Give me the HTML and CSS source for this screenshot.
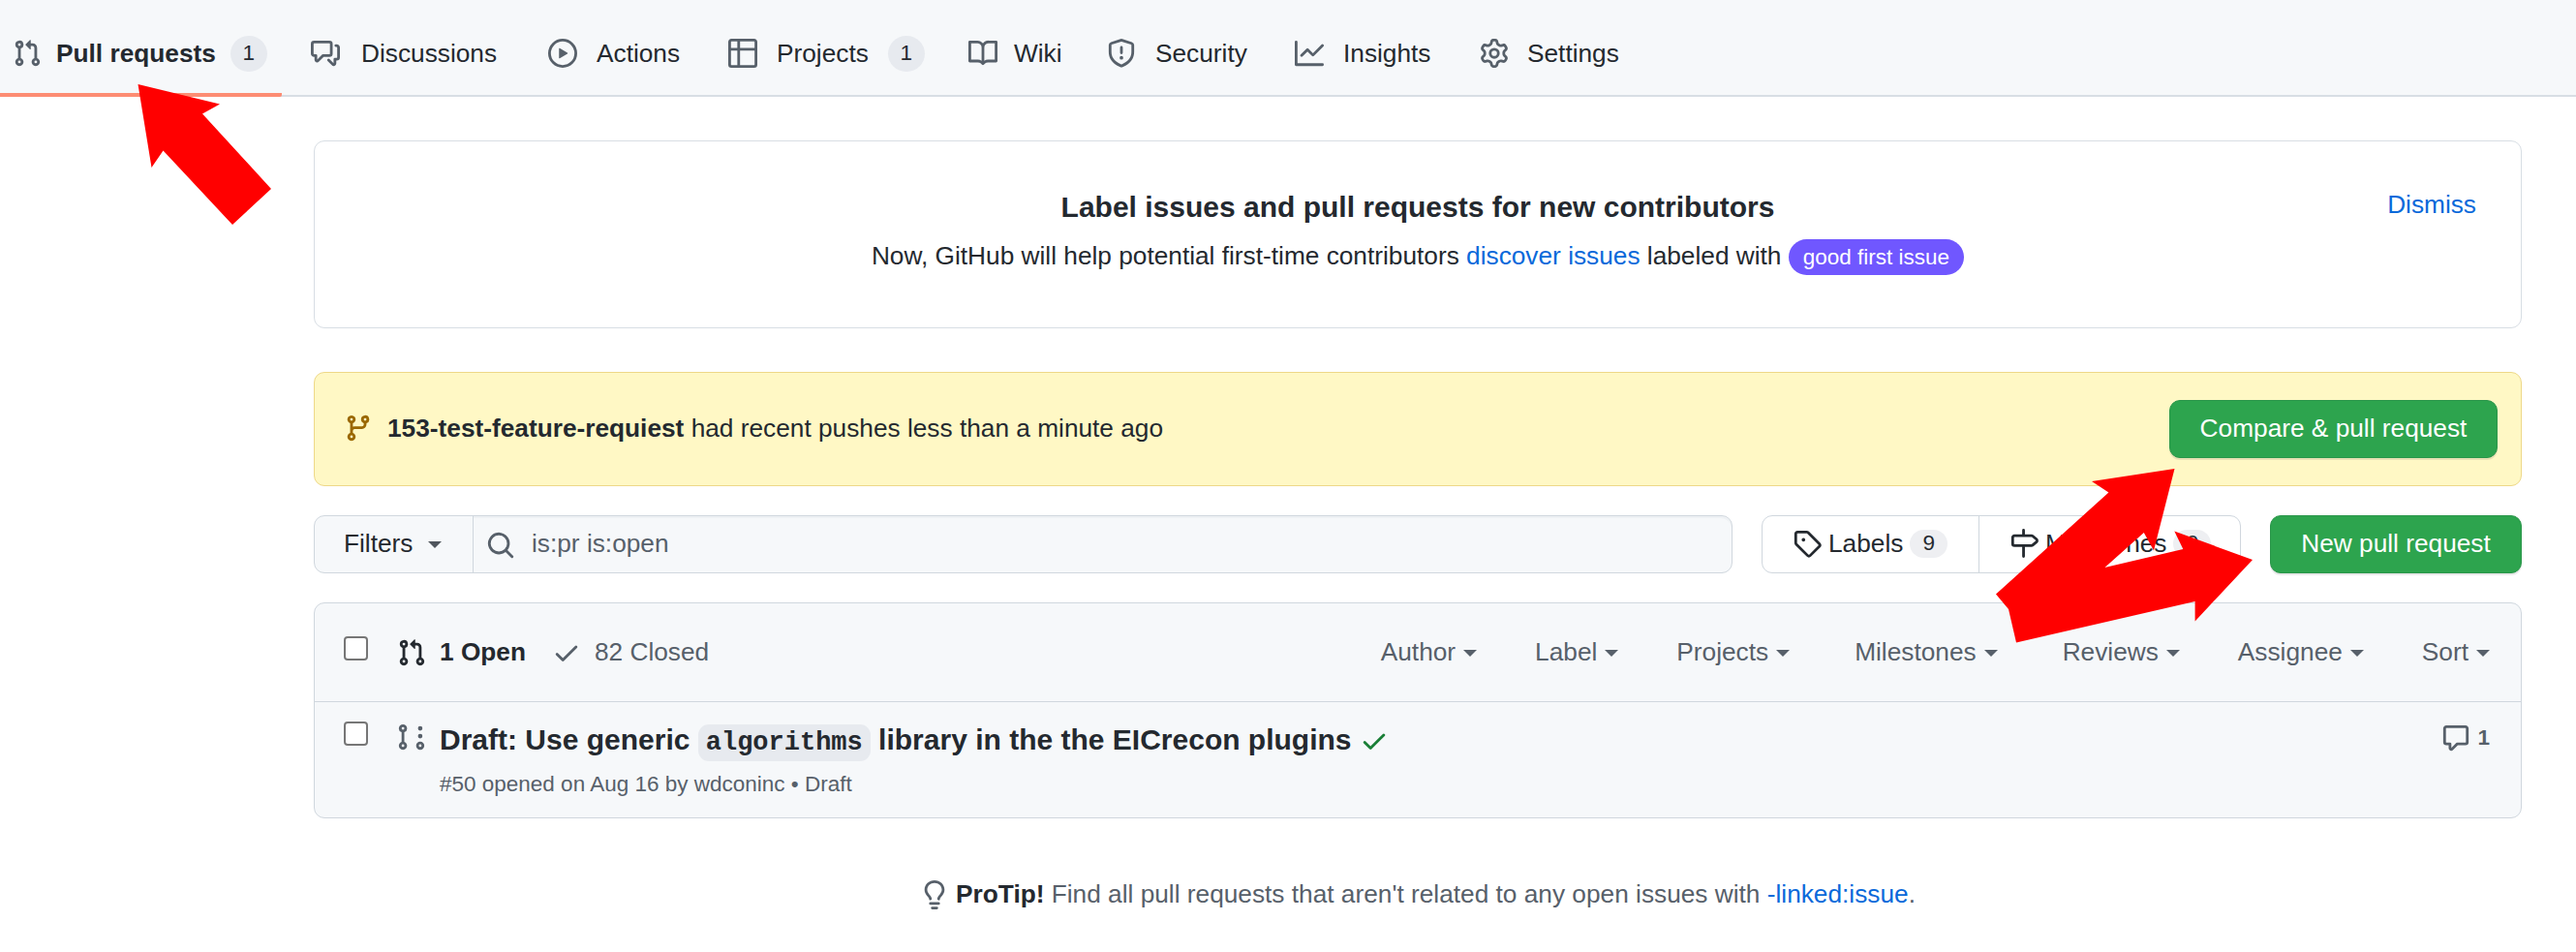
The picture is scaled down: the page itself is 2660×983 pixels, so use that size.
FILE: index.html
```html
<!DOCTYPE html>
<html lang="en">
<head>
<meta charset="utf-8">
<title>Pull requests</title>
<link rel="stylesheet" href="styles.css">
</head>
<body>
<svg class="defs" aria-hidden="true">
  <symbol id="pr" viewBox="0 0 16 16"><path fill-rule="evenodd" d="M7.177 3.073L9.573.677A.25.25 0 0110 .854v4.792a.25.25 0 01-.427.177L7.177 3.427a.25.25 0 010-.354zM3.75 2.5a.75.75 0 100 1.5.75.75 0 000-1.5zm-2.25.75a2.25 2.25 0 113 2.122v5.256a2.251 2.251 0 11-1.5 0V5.372A2.25 2.25 0 011.5 3.25zM11 2.5h-1V4h1a1 1 0 011 1v5.628a2.251 2.251 0 101.5 0V5A2.5 2.5 0 0011 2.5zm1 10.25a.75.75 0 111.5 0 .75.75 0 01-1.5 0zM3.75 12a.75.75 0 100 1.5.75.75 0 000-1.5z"/></symbol>
  <symbol id="draft" viewBox="0 0 16 16"><path fill-rule="evenodd" d="M2.5 3.25a.75.75 0 111.5 0 .75.75 0 01-1.5 0zM3.25 1a2.25 2.25 0 00-.75 4.372v5.256a2.251 2.251 0 101.5 0V5.372A2.25 2.25 0 003.25 1zm0 11a.75.75 0 100 1.5.75.75 0 000-1.5zm9.5 3a2.25 2.25 0 100-4.5 2.25 2.25 0 000 4.5zm0-3a.75.75 0 100 1.5.75.75 0 000-1.5zM14 7.5a1.25 1.25 0 11-2.5 0 1.25 1.25 0 012.5 0zm0-4.25a1.25 1.25 0 11-2.5 0 1.25 1.25 0 012.5 0z"/></symbol>
  <symbol id="branch" viewBox="0 0 16 16"><path fill-rule="evenodd" d="M11.75 2.5a.75.75 0 100 1.5.75.75 0 000-1.5zm-2.25.75a2.25 2.25 0 113 2.122V6A2.5 2.5 0 0110 8.5H6a1 1 0 00-1 1v1.128a2.251 2.251 0 11-1.5 0V5.372a2.25 2.25 0 111.5 0v1.836A2.492 2.492 0 016 7h4a1 1 0 001-1v-.628A2.25 2.25 0 019.5 3.25zM4.25 12a.75.75 0 100 1.5.75.75 0 000-1.5zM3.5 3.25a.75.75 0 111.5 0 .75.75 0 01-1.5 0z"/></symbol>
  <symbol id="discussion" viewBox="0 0 16 16"><path fill-rule="evenodd" d="M1.5 2.75a.25.25 0 01.25-.25h8.5a.25.25 0 01.25.25v5.5a.25.25 0 01-.25.25h-3.5a.75.75 0 00-.53.22L3.5 11.44V9.25a.75.75 0 00-.75-.75h-1a.25.25 0 01-.25-.25v-5.5zM1.75 1A1.75 1.75 0 000 2.75v5.5C0 9.216.784 10 1.75 10H2v1.543a1.457 1.457 0 002.487 1.03L7.061 10h3.189A1.75 1.75 0 0012 8.25v-5.5A1.75 1.75 0 0010.25 1h-8.5zM14.5 4.75a.25.25 0 00-.25-.25h-.5a.75.75 0 110-1.5h.5c.966 0 1.75.784 1.75 1.75v5.5A1.75 1.75 0 0114.25 12H14v1.543a1.457 1.457 0 01-2.487 1.03L9.22 12.28a.75.75 0 111.06-1.06l2.22 2.22v-2.19a.75.75 0 01.75-.75h1a.25.25 0 00.25-.25v-5.5z"/></symbol>
  <symbol id="play" viewBox="0 0 16 16"><path fill-rule="evenodd" d="M1.5 8a6.5 6.5 0 1113 0 6.5 6.5 0 01-13 0zM8 0a8 8 0 100 16A8 8 0 008 0zM6.379 5.227A.25.25 0 006 5.442v5.117a.25.25 0 00.379.214l4.264-2.559a.25.25 0 000-.428L6.379 5.227z"/></symbol>
  <symbol id="table" viewBox="0 0 16 16"><path fill-rule="evenodd" d="M0 1.75C0 .784.784 0 1.75 0h12.5C15.216 0 16 .784 16 1.75v12.5A1.75 1.75 0 0114.25 16H1.75A1.75 1.75 0 010 14.250V1.75zM1.5 6.5v7.75c0 .138.112.25.25.25H5v-8H1.500zM5 5H1.500V1.750a.25.25 0 01.25-.25H5V5zm1.500 1.500v8h7.750a.25.25 0 00.25-.25V6.500h-8zm8-1.500h-8V1.500h7.750a.25.25 0 01.25.25V5z"/></symbol>
  <symbol id="book" viewBox="0 0 16 16"><path fill-rule="evenodd" d="M0 1.75A.75.75 0 01.75 1h4.253c1.227 0 2.317.59 3 1.501A3.744 3.744 0 0111.006 1h4.245a.75.75 0 01.75.75v10.5a.75.75 0 01-.75.75h-4.507a2.25 2.25 0 00-1.591.659l-.622.621a.75.75 0 01-1.06 0l-.622-.621A2.25 2.25 0 005.258 13H.75a.75.75 0 01-.75-.75V1.75zm8.755 3a2.25 2.25 0 012.25-2.25H14.5v9h-3.757c-.71 0-1.4.201-1.992.572l.004-7.322zm-1.504 7.324l.004-5.073-.002-2.253A2.25 2.25 0 005.003 2.5H1.5v9h3.757a3.75 3.75 0 011.994.574z"/></symbol>
  <symbol id="shield" viewBox="0 0 16 16"><path fill-rule="evenodd" d="M7.467.133a1.75 1.75 0 011.066 0l5.25 1.68A1.75 1.75 0 0115 3.48V7c0 1.566-.32 3.182-1.303 4.682-.983 1.498-2.585 2.813-5.032 3.855a1.700 1.700 0 01-1.330 0c-2.447-1.042-4.049-2.357-5.032-3.855C1.320 10.182 1 8.566 1 7V3.480a1.750 1.750 0 011.217-1.667l5.250-1.680zm.61 1.429a.25.25 0 00-.153 0l-5.250 1.680a.25.25 0 00-.174.238V7c0 1.358.275 2.666 1.057 3.860.784 1.194 2.121 2.340 4.366 3.297a.2.2 0 00.154 0c2.245-.956 3.582-2.104 4.366-3.298C13.225 9.666 13.500 8.360 13.500 7V3.480a.25.25 0 00-.174-.237l-5.250-1.680zM9 10.500a1 1 0 11-2 0 1 1 0 012 0zm-.25-5.750a.75.75 0 10-1.500 0v3a.75.75 0 001.500 0v-3z"/></symbol>
  <symbol id="graph" viewBox="0 0 16 16"><path fill-rule="evenodd" d="M1.5 1.75a.75.75 0 00-1.5 0v12.500c0 .414.336.75.75.75h14.500a.75.75 0 000-1.500H1.500V1.750zm14.280 2.530a.75.75 0 00-1.060-1.060L10 7.940 7.530 5.470a.75.75 0 00-1.060 0L3.220 8.720a.75.75 0 001.060 1.060L7 7.060l2.470 2.470a.75.75 0 001.060 0l5.250-5.250z"/></symbol>
  <symbol id="gear" viewBox="0 0 16 16"><path fill-rule="evenodd" d="M7.429 1.525a6.593 6.593 0 011.142 0c.036.003.108.036.137.146l.289 1.105c.147.56.55.967.997 1.189.174.086.341.183.501.29.417.278.97.423 1.53.27l1.102-.303c.11-.03.175.016.195.046.219.31.41.641.573.989.014.031.022.11-.059.19l-.815.806c-.411.406-.562.957-.53 1.456a4.588 4.588 0 010 .582c-.032.499.119 1.05.53 1.456l.815.806c.08.08.073.159.059.19a6.494 6.494 0 01-.573.99c-.02.029-.086.074-.195.045l-1.103-.303c-.559-.153-1.112-.008-1.529.27-.16.107-.327.204-.5.29-.449.222-.851.628-.998 1.189l-.289 1.105c-.029.11-.101.143-.137.146a6.613 6.613 0 01-1.142 0c-.036-.003-.108-.037-.137-.146l-.289-1.105c-.147-.56-.55-.967-.997-1.189a4.502 4.502 0 01-.501-.29c-.417-.278-.97-.423-1.53-.27l-1.102.303c-.11.03-.175-.016-.195-.046a6.492 6.492 0 01-.573-.989c-.014-.031-.022-.11.059-.19l.815-.806c.411-.406.562-.957.53-1.456a4.587 4.587 0 010-.582c.032-.499-.119-1.05-.53-1.456l-.815-.806c-.08-.08-.073-.159-.059-.19a6.440 6.440 0 01.573-.99c.02-.029.086-.075.195-.045l1.103.303c.559.153 1.112.008 1.529-.27.16-.107.327-.204.5-.29.449-.222.851-.628.998-1.189l.289-1.105c.029-.11.101-.143.137-.146zM8 0c-.236 0-.47.010-.701.030-.743.065-1.290.615-1.458 1.261l-.290 1.106c-.017.066-.078.158-.211.224a5.994 5.994 0 00-.668.386c-.123.082-.233.090-.300.071L3.270 2.776c-.644-.177-1.392.020-1.820.630a7.977 7.977 0 00-.704 1.217c-.315.675-.111 1.422.363 1.891l.815.806c.050.048.098.147.088.294a6.084 6.084 0 000 .772c.010.147-.038.246-.088.294l-.815.806c-.474.469-.678 1.216-.363 1.891.2.428.436.835.704 1.218.428.609 1.176.806 1.820.630l1.103-.303c.066-.019.176-.011.299.071.213.143.436.272.668.386.133.066.194.158.212.224l.289 1.106c.169.646.715 1.196 1.458 1.260a8.094 8.094 0 001.402 0c.743-.064 1.290-.614 1.458-1.260l.290-1.106c.017-.066.078-.158.211-.224a5.980 5.980 0 00.668-.386c.123-.082.233-.090.300-.071l1.102.302c.644.177 1.392-.020 1.820-.630.268-.382.505-.789.704-1.217.315-.675.111-1.422-.364-1.891l-.814-.806c-.050-.048-.098-.147-.088-.294a6.100 6.100 0 000-.772c-.010-.147.039-.246.088-.294l.814-.806c.475-.469.679-1.216.364-1.891a7.992 7.992 0 00-.704-1.218c-.428-.609-1.176-.806-1.820-.630l-1.103.303c-.066.019-.176.011-.299-.071a5.991 5.991 0 00-.668-.386c-.133-.066-.194-.158-.212-.224L10.160 1.290C9.990.645 9.444.095 8.701.031A8.094 8.094 0 008 0zm1.500 8a1.500 1.500 0 11-3 0 1.500 1.500 0 013 0zM11 8a3 3 0 11-6 0 3 3 0 016 0z"/></symbol>
  <symbol id="search" viewBox="0 0 16 16"><path fill-rule="evenodd" d="M11.500 7a4.499 4.499 0 11-8.998 0A4.499 4.499 0 0111.500 7zm-.82 4.740a6 6 0 111.060-1.060l3.040 3.040a.75.75 0 11-1.060 1.060l-3.040-3.040z"/></symbol>
  <symbol id="tag" viewBox="0 0 16 16"><path fill-rule="evenodd" d="M2.500 7.775V2.750a.25.25 0 01.25-.25h5.025a.25.25 0 01.177.073l6.250 6.250a.25.25 0 010 .354l-5.025 5.025a.25.25 0 01-.354 0l-6.250-6.250a.25.25 0 01-.073-.177zm-1.500 0V2.750C1 1.784 1.784 1 2.750 1h5.025c.464 0 .91.184 1.238.513l6.250 6.250a1.750 1.750 0 010 2.474l-5.026 5.026a1.750 1.750 0 01-2.474 0l-6.250-6.250A1.750 1.750 0 011 7.775zM6 5a1 1 0 100 2 1 1 0 000-2z"/></symbol>
  <symbol id="milestone" viewBox="0 0 16 16"><path fill-rule="evenodd" d="M7.750 0a.75.75 0 01.75.75V3h3.634c.414 0 .814.147 1.130.414l2.070 1.750a1.750 1.750 0 010 2.672l-2.070 1.750a1.750 1.750 0 01-1.130.414H8.500v5.250a.75.75 0 11-1.500 0V10H2.750A1.750 1.750 0 011 8.250v-3.500C1 3.784 1.784 3 2.750 3H7V.75A.75.75 0 017.750 0zm0 8.500h4.384a.25.25 0 00.161-.060l2.070-1.750a.25.25 0 000-.380l-2.070-1.750a.25.25 0 00-.161-.060H2.750a.25.25 0 00-.25.25v3.500c0 .138.112.25.25.25h5z"/></symbol>
  <symbol id="check" viewBox="0 0 16 16"><path fill-rule="evenodd" d="M13.780 4.220a.75.75 0 010 1.060l-7.250 7.250a.75.75 0 01-1.060 0L2.220 9.280a.75.75 0 011.060-1.060L6 10.940l6.720-6.720a.75.75 0 011.060 0z"/></symbol>
  <symbol id="comment" viewBox="0 0 16 16"><path fill-rule="evenodd" d="M2.750 2.500a.25.25 0 00-.25.25v7.500c0 .138.112.25.25.25h2a.75.75 0 01.75.75v2.190l2.720-2.720a.75.75 0 01.53-.22h4.500a.25.25 0 00.25-.25v-7.500a.25.25 0 00-.25-.25H2.750zM1 2.750C1 1.784 1.784 1 2.750 1h10.500c.966 0 1.750.784 1.750 1.750v7.500A1.750 1.750 0 0113.250 12H9.060l-2.573 2.573A1.457 1.457 0 014 13.543V12H2.750A1.750 1.750 0 011 10.250v-7.500z"/></symbol>
  <symbol id="bulb" viewBox="0 0 16 16"><path fill-rule="evenodd" d="M8 1.500c-2.363 0-4 1.690-4 3.750 0 .984.424 1.625.984 2.304l.214.253c.223.264.470.556.673.848.284.411.537.896.621 1.490a.75.75 0 01-1.484.211c-.040-.282-.163-.547-.370-.847a8.695 8.695 0 00-.542-.680c-.084-.100-.173-.205-.268-.320C3.201 7.750 2.500 6.766 2.500 5.250 2.500 2.310 4.863 0 8 0s5.500 2.310 5.500 5.250c0 1.516-.701 2.500-1.328 3.259-.095.115-.184.220-.268.319-.207.245-.383.453-.541.681-.208.300-.330.565-.370.847a.75.75 0 01-1.485-.212c.084-.593.337-1.078.621-1.489.203-.292.450-.584.673-.848.075-.088.147-.173.213-.253.561-.679.985-1.320.985-2.304 0-2.060-1.637-3.750-4-3.750zM6 15.250a.75.75 0 01.75-.75h2.500a.75.75 0 010 1.500h-2.500a.75.75 0 01-.75-.75zM5.750 12a.75.75 0 000 1.500h4.500a.75.75 0 000-1.500h-4.500z"/></symbol>
</svg>

<nav class="nav">
  <a class="tab tab-active"><svg class="icon"><use href="#pr"/></svg><span>Pull requests</span><span class="count">1</span></a>
  <a class="tab tab-discussions"><svg class="icon"><use href="#discussion"/></svg><span>Discussions</span></a>
  <a class="tab tab-actions"><svg class="icon"><use href="#play"/></svg><span>Actions</span></a>
  <a class="tab tab-projects"><svg class="icon"><use href="#table"/></svg><span>Projects</span><span class="count">1</span></a>
  <a class="tab tab-wiki"><svg class="icon"><use href="#book"/></svg><span>Wiki</span></a>
  <a class="tab tab-security"><svg class="icon"><use href="#shield"/></svg><span>Security</span></a>
  <a class="tab tab-insights"><svg class="icon"><use href="#graph"/></svg><span>Insights</span></a>
  <a class="tab tab-settings"><svg class="icon"><use href="#gear"/></svg><span>Settings</span></a>
</nav>

<main class="main">
  <section class="notice">
    <a class="dismiss link">Dismiss</a>
    <h2 class="notice-title">Label issues and pull requests for new contributors</h2>
    <p class="notice-text">Now, GitHub will help potential first-time contributors <a class="link">discover issues</a> labeled with <span class="pill">good first issue</span></p>
  </section>

  <section class="push">
    <svg class="icon push-icon"><use href="#branch"/></svg>
    <p class="push-text"><b>153-test-feature-requiest</b> had recent pushes less than a minute ago</p>
    <button class="btn btn-compare">Compare &amp; pull request</button>
  </section>

  <div class="toolbar">
    <div class="search">
      <div class="filters">Filters<i class="caret"></i></div>
      <div class="query"><svg class="icon"><use href="#search"/></svg><span>is:pr is:open</span></div>
    </div>
    <div class="group">
      <a class="group-item group-labels"><svg class="icon"><use href="#tag"/></svg><span>Labels</span><span class="count count-sm">9</span></a>
      <a class="group-item"><svg class="icon"><use href="#milestone"/></svg><span>Milestones</span><span class="count count-sm">0</span></a>
    </div>
    <button class="btn btn-new">New pull request</button>
  </div>

  <section class="list">
    <header class="list-head">
      <i class="box"></i>
      <a class="state state-open"><svg class="icon"><use href="#pr"/></svg>1 Open</a>
      <a class="state state-closed"><svg class="icon"><use href="#check"/></svg>82 Closed</a>
      <div class="sorts">
        <a>Author<i class="caret"></i></a>
        <a>Label<i class="caret"></i></a>
        <a class="sort-wide">Projects<i class="caret"></i></a>
        <a class="sort-wide">Milestones<i class="caret"></i></a>
        <a>Reviews<i class="caret"></i></a>
        <a>Assignee<i class="caret"></i></a>
        <a>Sort<i class="caret"></i></a>
      </div>
    </header>
    <article class="row">
      <i class="box"></i>
      <svg class="icon row-icon"><use href="#draft"/></svg>
      <div class="row-body">
        <h3 class="row-title">Draft: Use generic <code>algorithms</code> library in the the EICrecon plugins <svg class="icon ok"><use href="#check"/></svg></h3>
        <p class="row-meta">#50 opened on Aug 16 by wdconinc • Draft</p>
      </div>
      <a class="comments"><svg class="icon"><use href="#comment"/></svg>1</a>
    </article>
  </section>

  <p class="tip"><svg class="icon"><use href="#bulb"/></svg><span><b>ProTip!</b> Find all pull requests that aren't related to any open issues with <a class="link">-linked:issue</a>.</span></p>
</main>

<svg class="arrows" viewBox="0 0 2660 983" aria-hidden="true">
  <polygon points="142.500,87 227,107.500 209,117.500 280,195 240,232 168.500,155.500 156.500,173"/>
  <polygon points="2245.500,484 2224,568.500 2213.800,550 2173.400,586 2254.300,567 2245.300,548.500 2326,578 2266.600,641.500 2266.600,621 2082,663.500 2074,629 2061,613.500 2177.400,508.500 2160,497"/>
</svg>
</body>
</html>
```
FILE: styles.css
```css
* { box-sizing: border-box; }

body {
  margin: 0;
  height: 983px;
  overflow: hidden;
  position: relative;
  background: #fff;
  color: #24292f;
  font: 26.25px/39px "Liberation Sans", Arial, sans-serif;
}

h2, h3, p { margin: 0; }
b { font-weight: 700; }
.defs { position: absolute; width: 0; height: 0; }
.icon { width: 30px; height: 30px; fill: currentColor; flex: none; display: block; }
.link { color: #0969da; }

.nav {
  height: 100px;
  display: grid;
  grid-template-columns: 321px 245px 186px 248px 143px 194px 191px 300px;
  background: #f6f8fa;
  border-bottom: 2px solid #d8dee4;
}
.tab { display: flex; align-items: center; height: 100px; padding-top: 10px; gap: 20px; white-space: nowrap; }
.tab .icon { color: #57606a; }
.tab-active {
  width: 291px;
  padding-left: 13px;
  padding-top: 14px;
  gap: 15px;
  font-weight: 700;
  border-bottom: 4px solid #fd8c73;
  border-bottom-right-radius: 2px;
}
.tab-discussions { gap: 22px; }
.tab-wiki { gap: 17px; }
.tab-settings { gap: 19px; }

.count {
  display: inline-block;
  min-width: 38px;
  height: 37px;
  padding: 0 11px;
  border-radius: 19px;
  background: #e7eaef;
  font-size: 22.5px;
  font-weight: 400;
  line-height: 35px;
  text-align: center;
}
.count-sm { min-width: 39px; height: 29px; line-height: 28px; background: #eeeff2; }

.main { width: 2280px; margin: 45px 0 0 324px; }

.notice {
  position: relative;
  height: 194px;
  padding-top: 45px;
  border: 1px solid #d8dee4;
  border-radius: 11px;
  text-align: center;
}
.notice-title { font-size: 30px; line-height: 45px; }
.notice-text { margin-top: 9px; line-height: 39px; }
.dismiss { position: absolute; top: 46px; right: 46px; }
.pill {
  display: inline-block;
  height: 37px;
  padding: 0 15px;
  border-radius: 19px;
  background: #7057ff;
  color: #fff;
  font-size: 22.5px;
  line-height: 37px;
}

.push {
  display: flex;
  align-items: center;
  height: 118px;
  margin-top: 45px;
  padding: 0 24px 0 30px;
  background: #fff8c5;
  border: 1px solid #eed888;
  border-radius: 11px;
}
.push-icon { color: #9a6700; margin-bottom: 2px; }
.push-text { flex: 1; padding: 0 0 2px 15px; }

.btn {
  height: 60px;
  padding: 0 0 2px;
  border: 1px solid #2a964a;
  border-radius: 11px;
  background: #2da44e;
  color: #fff;
  font: 26.25px/39px "Liberation Sans", Arial, sans-serif;
  box-shadow: 0 2px 0 rgba(27, 31, 36, 0.1);
}
.btn-compare { width: 339px; }
.btn-new { width: 260px; }

.toolbar { display: flex; justify-content: space-between; height: 60px; margin-top: 30px; }
.search {
  display: flex;
  width: 1465px;
  border: 1px solid #d0d7de;
  border-radius: 11px;
  background: #f6f8fa;
}
.filters {
  display: flex;
  align-items: center;
  width: 164px;
  padding: 0 0 2px 30px;
  border-right: 1px solid #d0d7de;
}
.caret {
  display: inline-block;
  margin-left: 8px;
  border: 7.5px solid transparent;
  border-top-color: currentColor;
  border-bottom: 0;
  vertical-align: 4px;
}
.filters .caret { margin: 3px 0 0 16px; color: #50565d; }
.query {
  flex: 1;
  display: flex;
  align-items: center;
  padding: 0 0 2px 13px;
  gap: 17px;
  color: #57606a;
  border-radius: 0 11px 11px 0;
  box-shadow: inset 0 2px 0 rgba(208, 215, 222, 0.2);
}
.query .icon { margin-top: 4px; }

.group { display: flex; width: 495px; border: 1px solid #d0d7de; border-radius: 11px; }
.group-item { display: flex; align-items: center; padding: 0 0 2px 31px; gap: 7px; }
.group-labels { width: 224px; border-right: 1px solid #d0d7de; }

.list { height: 223px; margin-top: 30px; border: 1px solid #d0d7de; border-radius: 11px; background: #f6f8fa; }
.list-head { display: flex; height: 102px; padding: 31px 32px 0 30px; border-bottom: 1px solid #d0d7de; color: #57606a; }
.box {
  flex: none;
  width: 25px;
  height: 25px;
  margin-top: 3px;
  border: 2px solid #767676;
  border-radius: 4px;
  background: #fff;
}
.state { display: flex; height: 39px; align-items: center; }
.state .icon { margin-right: 14px; }
.state-open { margin-left: 30px; color: #24292f; font-weight: 700; }
.state-closed { margin-left: 27px; }
.sorts { flex: 1; display: flex; justify-content: flex-end; gap: 60px; }
.sort-wide { margin-right: 7px; }

.row { display: flex; padding: 17px 32px 0 30px; }
.row-icon { margin: 4px 0 0 30px; color: #57606a; }
.row-body { flex: 1; margin-left: 14px; margin-top: -1px; }
.row-title { font-size: 30px; line-height: 45px; }
.row-title code {
  padding: 4px 8px;
  border-radius: 11px;
  background: #e7eaef;
  font: 700 27px/30px "Liberation Mono", monospace;
}
.ok { display: inline-block; color: #1a7f37; vertical-align: -6px; }
.row-meta { margin-top: 7px; font-size: 22.5px; line-height: 33px; color: #57606a; }
.comments { display: flex; align-items: center; gap: 7px; height: 39px; font-size: 22.5px; font-weight: 700; color: #57606a; }

.tip { display: flex; justify-content: center; align-items: center; gap: 7px; margin-top: 59px; color: #57606a; }
.tip b { color: #24292f; }

.arrows { position: absolute; left: 0; top: 0; width: 2660px; height: 983px; fill: #f00; pointer-events: none; }
```
